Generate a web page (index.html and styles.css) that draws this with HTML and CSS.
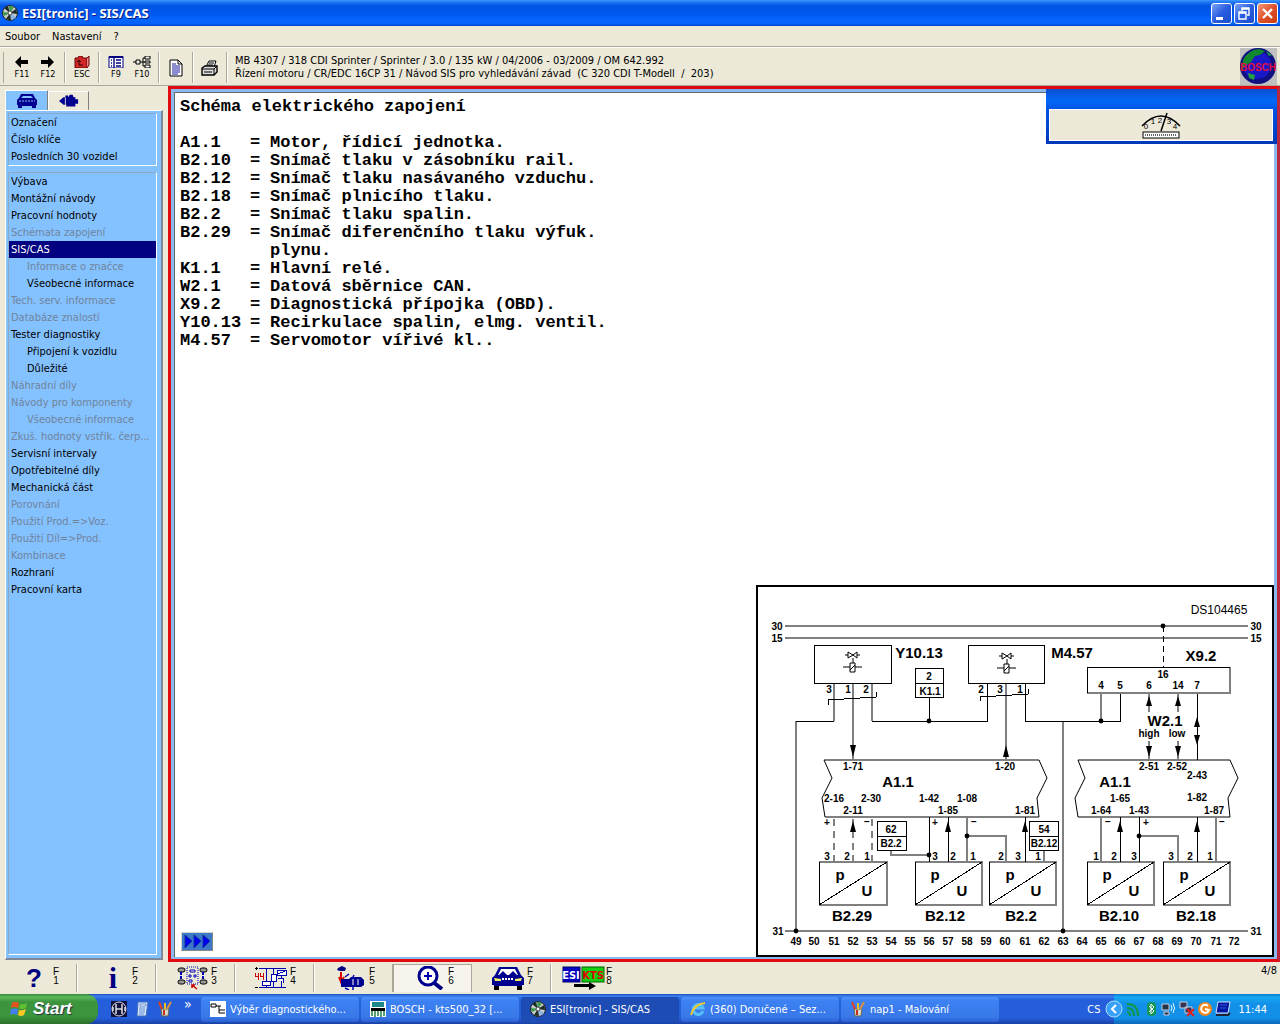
FILE: index.html
```html
<!DOCTYPE html>
<html lang="cs">
<head>
<meta charset="utf-8">
<title>ESI[tronic] - SIS/CAS</title>
<link rel="stylesheet" href="styles.css">
</head>
<body>
<svg class="defs" aria-hidden="true">
  <symbol id="disc" viewBox="0 0 16 16">
    <circle cx="8" cy="8" r="7.5" fill="#c8ccc8" stroke="#222"/>
    <path d="M8 8L2 3A8 8 0 0 1 6 1ZM8 8L14 4A8 8 0 0 1 15 9ZM8 8L9 15A8 8 0 0 1 4 14Z" fill="#1c2c28"/>
    <path d="M8 8L7 1A8 8 0 0 1 12 2ZM8 8L1 7A8 8 0 0 0 2 11Z" fill="#3c9a4c"/>
    <path d="M8 8L14 12A8 8 0 0 1 10 15Z" fill="#88b4e8"/>
    <circle cx="8" cy="8" r="2" fill="#fff" stroke="#444"/>
  </symbol>
  <symbol id="car" viewBox="0 0 34 24">
    <path d="M8 1H26L30 9L33 12V19H31V23H26V20H8V23H3V19H1V12L4 9Z" fill="#000090"/>
    <path d="M10 3H24L27 9H7Z" fill="#fff"/>
    <path d="M8 9L12 5L16 9ZM18 9L22 5L26 9Z" fill="#000090"/>
    <path d="M3 12L10 13V15L4 15ZM31 12L24 13V15L30 15Z" fill="#f4f060"/>
    <path d="M11 13H23" stroke="#fff" stroke-width="2" stroke-dasharray="2 1"/>
    <path d="M3 20H8V24H3ZM26 20H31V24H26Z" fill="#000"/>
  </symbol>
  <symbol id="bluecar" viewBox="0 0 22 14">
    <path d="M5 0H17L19 4L21 6V11H20V14H16V12H6V14H2V11H1V6L3 4Z" fill="#000090"/>
    <path d="M7 2H15L17 4H5Z" fill="#84c1ff"/>
    <path d="M3 7H19" stroke="#84c1ff" stroke-dasharray="2 1"/>
  </symbol>
  <symbol id="paint" viewBox="0 0 16 16">
    <path d="M4 8H12L11 15H5Z" fill="#d8d8c8" stroke="#665"/>
    <path d="M5 8L2 1" stroke="#e04020" stroke-width="2"/>
    <path d="M8 8V2" stroke="#f0c020" stroke-width="2"/>
    <path d="M10 8L14 1" stroke="#d89040" stroke-width="2"/>
    <path d="M7 9V14" stroke="#c03020" stroke-width="2"/>
  </symbol>
</svg>

<header class="titlebar">
  <svg class="i16"><use href="#disc"/></svg>
  <h1>ESI[tronic] - SIS/CAS</h1>
  <div class="winbtns">
    <button aria-label="Minimalizovat"><svg viewBox="0 0 19 19"><path d="M4 13H11V16H4Z" fill="#fff"/></svg></button>
    <button aria-label="Obnovit"><svg viewBox="0 0 19 19"><path d="M7 7V4H14V11H12M7 5H14M4 8H11V15H4ZM4 9H11" fill="none" stroke="#fff" stroke-width="1.4"/></svg></button>
    <button class="close" aria-label="Zavřít"><svg viewBox="0 0 19 19"><path d="M5 5L14 14M14 5L5 14" stroke="#fff" stroke-width="2.3"/></svg></button>
  </div>
</header>

<nav class="menubar">
  <button>Soubor</button><button>Nastavení</button><button>?</button>
</nav>

<div class="toolbar">
  <div class="tgroup first">
    <button><svg viewBox="0 0 18 12"><path d="M2 6L8 0V4H15V8H8V12Z"/></svg>F11</button>
    <button><svg viewBox="0 0 18 12"><path d="M15 6L9 0V4H2V8H9V12Z"/></svg>F12</button>
  </div>
  <div class="tgroup"><button><svg viewBox="0 0 18 12"><path d="M2 2H5L6 0H9L10 2H14V12H2Z" fill="#d02828" stroke="#600"/><path d="M14 2L16 0V9L14 12" fill="#e88" stroke="#600"/><path d="M6 9V4M4 6L6 4L8 6M6 9H10" fill="none" stroke="#300"/></svg>ESC</button></div>
  <div class="tgroup">
    <button><svg viewBox="0 0 18 12"><rect x="2" y="1" width="14" height="11" fill="#fff" stroke="#000080"/><path d="M2 1H16" stroke="#000080" stroke-width="2"/><path d="M7 2V12M4 4H5M4 7H5M4 10H5M9 4H14M9 7H14M9 10H14" stroke="#000080" stroke-width="1.4"/></svg>F9</button>
    <button><svg viewBox="0 0 18 12"><path d="M0 6H10M10 2V10M10 2H12M10 6H12M10 10H12" stroke="#000"/><path d="M3 4H7V8H3ZM12 0H17V3H12ZM12 5H17V7H12ZM12 9H17V12H12Z" fill="#eee" stroke="#000"/></svg>F10</button>
  </div>
  <div class="tgroup"><button aria-label="Dokument"><svg class="tall" viewBox="0 0 18 18"><path d="M3 1H11L15 5V17H3Z" fill="#fff" stroke="#000"/><path d="M11 1V5H15" fill="none" stroke="#000"/><path d="M5 5H9M5 7H13M5 9H13M5 11H13M5 13H13M5 15H11" stroke="#1818a0"/></svg></button></div>
  <div class="tgroup"><button aria-label="Tisk"><svg class="tall" viewBox="0 0 18 18"><path d="M5 8L8 2H15L13 8Z" fill="#fff" stroke="#000"/><path d="M8 4H13M7 6H12" stroke="#000"/><path d="M1 9L4 7H16V13L13 16H1Z" fill="#ddd" stroke="#000" stroke-width="1.4"/><path d="M1 10H13V16M13 10L16 7M3 13H11" fill="none" stroke="#000"/></svg></button></div>
  <p class="vehicle">MB 4307 / 318 CDI Sprinter / Sprinter / 3.0 / 135 kW / 04/2006 - 03/2009 / OM 642.992<br>Řízení motoru / CR/EDC 16CP 31 / Návod SIS pro vyhledávání závad&nbsp; (C 320 CDI T-Modell&nbsp; /&nbsp; 203)</p>
  <svg class="globe" viewBox="0 0 37 37"><rect width="37" height="37" fill="#c0c0c0"/><circle cx="18" cy="18" r="18" fill="#101080"/><circle cx="17" cy="17" r="14" fill="#1818c8"/><path d="M3 12Q8 2 19 1L25 3L20 7L15 8L11 14L6 17L2 22Z" fill="#108830"/><path d="M26 3L32 7L29 8ZM8 25L15 27L14 32L9 30Z" fill="#20a040"/><text x="18" y="23" text-anchor="middle">BOSCH</text></svg>
</div>

<main>
  <aside>
    <div class="tabs">
      <button class="on" aria-label="Vozidlo"><svg class="tabcar"><use href="#bluecar"/></svg></button>
      <button aria-label="Komponenty"><svg class="tabpump" viewBox="0 0 22 14"><path d="M0 7L5 3H7V1H10V3L12 0H15L16 3H18V5H21V10H18V13H8V11H5Z" fill="#000090"/><path d="M7 3V12" stroke="#ddd"/></svg></button>
    </div>
    <nav class="panel">
      <div class="group">
        <button>Označení</button><button>Číslo klíče</button><button>Posledních 30 vozidel</button>
      </div>
      <div class="group grow">
        <button>Výbava</button><button>Montážní návody</button><button>Pracovní hodnoty</button>
        <button disabled>Schémata zapojení</button><button class="sel">SIS/CAS</button>
        <button class="sub" disabled>Informace o značce</button><button class="sub">Všeobecné informace</button>
        <button disabled>Tech. serv. informace</button><button disabled>Databáze znalostí</button>
        <button>Tester diagnostiky</button><button class="sub">Připojení k vozidlu</button><button class="sub">Důležité</button>
        <button disabled>Náhradní díly</button><button disabled>Návody pro komponenty</button><button class="sub" disabled>Všeobecné informace</button>
        <button disabled>Zkuš. hodnoty vstřik. čerp...</button><button>Servisní intervaly</button><button>Opotřebitelné díly</button>
        <button>Mechanická část</button><button disabled>Porovnání</button><button disabled>Použití Prod.=&gt;Voz.</button>
        <button disabled>Použití Díl=&gt;Prod.</button><button disabled>Kombinace</button><button>Rozhraní</button><button>Pracovní karta</button>
      </div>
    </nav>
  </aside>

  <section class="frame">
    <div class="sheet">
      <div class="doc">
        <h2>Schéma elektrického zapojení</h2>
        <table>
          <tr><th>A1.1</th><td>=</td><td>Motor, řídicí jednotka.</td></tr>
          <tr><th>B2.10</th><td>=</td><td>Snímač tlaku v zásobníku rail.</td></tr>
          <tr><th>B2.12</th><td>=</td><td>Snímač tlaku nasávaného vzduchu.</td></tr>
          <tr><th>B2.18</th><td>=</td><td>Snímač plnicího tlaku.</td></tr>
          <tr><th>B2.2</th><td>=</td><td>Snímač tlaku spalin.</td></tr>
          <tr><th>B2.29</th><td>=</td><td>Snímač diferenčního tlaku výfuk.<br>plynu.</td></tr>
          <tr><th>K1.1</th><td>=</td><td>Hlavní relé.</td></tr>
          <tr><th>W2.1</th><td>=</td><td>Datová sběrnice CAN.</td></tr>
          <tr><th>X9.2</th><td>=</td><td>Diagnostická přípojka (OBD).</td></tr>
          <tr><th>Y10.13</th><td>=</td><td>Recirkulace spalin, elmg. ventil.</td></tr>
          <tr><th>M4.57</th><td>=</td><td>Servomotor vířivé kl..</td></tr>
        </table>
      </div>
      <div class="lower">
        <button class="next" aria-label="Další"><svg viewBox="0 0 28 15"><path d="M2 1L9 7L2 14ZM11 1L18 7L11 14ZM20 1L27 7L20 14Z" fill="#0000f0" stroke="#1030a0"/></svg></button>
        <svg class="scheme" viewBox="758 587 514 368" role="img" aria-label="Schéma DS104465">
          <g class="gray">
            <path d="M785 626H1248M785 638H1248M785 931H1248"/>
            <path d="M834 684V721M853 684V760M872 684V721M796 721V931M1006 684V760M1101 694V721M1063 721V931"/>
            <path d="M1149 694V712M1149 741V760M1178 694V712M1178 741V760M824 760H1039M825 817H1039M1078 760H1230M1078 817H1230"/>
            <path d="M891 850V855H929M967 817V862M967 836H1006V862M1044 850V862M1101 817V862M1139 836H1178V862M1216 817V862"/>
            <path stroke-dasharray="7 5" d="M834 819V862M853 819V862M872 819V862"/>
            <path d="M819 862H887V905H819M915 862H982V905H915M989 862H1056V905H989M1087 862H1154V905H1087M1163 862H1230V905H1163M1230 667V693H1087"/>
          </g>
          <g class="black">
            <rect x="814" y="645" width="77" height="38"/><rect x="968" y="645" width="76" height="38"/>
            <path d="M834 721H796M872 721H987V684M828 705V700L876 697V692M980 701V697L1028 694V689M1025 684V721H1120V694M1087 693V667H1230M929 697V721"/>
            <path d="M915 668H943V697H915ZM915 683H943M877 821H906V850H877ZM877 836H906M1029 821H1058V850H1029ZM1029 836H1058"/>
            <path d="M1163 626V667" stroke-dasharray="6 4"/>
            <path d="M1197 694V760M929 817V862M948 817V862M1025 817V862M1120 817V862M1139 817V862M1197 817V862"/>
            <path d="M819 862V905L887 862M915 862V905L982 862M989 862V905L1056 862M1087 862V905L1154 862M1163 862V905L1230 862"/>
          </g>
          <g class="thin">
            <path d="M824 760L832 778L822 798L825 817M1039 760L1047 778L1037 798L1039 817M1078 760L1085 778L1075 798L1078 817M1230 760L1238 778L1228 798L1230 817"/>
            <path id="valve" d="M845 655H848M857 655H860M848 652L853 655L848 658ZM857 652L853 655L857 658ZM853 658V663M843 667H850M855 667H862M850 663H855V672H850ZM850 670L855 665"/>
            <use href="#valve" x="154" y="1"/>
          </g>
          <g class="solid">
            <path d="M850 745H856L853 757ZM1003 757H1009L1006 745ZM1146 706H1152L1149 696ZM1175 706H1181L1178 696ZM1146 746H1152L1149 757ZM1175 746H1181L1178 757ZM1194 727H1200L1197 717ZM1194 735H1200L1197 745Z"/>
            <path d="M850 832H856L853 821ZM945 832H951L948 821ZM1022 832H1028L1025 821ZM1117 832H1123L1120 821ZM1194 832H1200L1197 821Z"/>
            <circle cx="929" cy="721" r="2.4"/><circle cx="1101" cy="721" r="2.4"/><circle cx="1163" cy="626" r="2.4"/><circle cx="929" cy="855" r="2.4"/><circle cx="967" cy="836" r="2.4"/><circle cx="1139" cy="836" r="2.4"/><circle cx="796" cy="931" r="2.4"/><circle cx="1063" cy="931" r="2.4"/>
          </g>
          <text class="ds" x="1219" y="614">DS104465</text>
          <g class="pin">
            <text x="777" y="630">30</text><text x="777" y="642">15</text><text x="1256" y="630">30</text><text x="1256" y="642">15</text><text x="778" y="935">31</text><text x="1256" y="935">31</text>
            <text x="829" y="693">3</text><text x="848" y="693">1</text><text x="866" y="693">2</text><text x="981" y="693">2</text><text x="1000" y="693">3</text><text x="1020" y="693">1</text>
            <text x="929" y="680">2</text><text x="930" y="695">K1.1</text><text x="891" y="833">62</text><text x="891" y="847">B2.2</text><text x="1044" y="833">54</text><text x="1044" y="847">B2.12</text>
            <text x="1163" y="678">16</text><text x="1101" y="689">4</text><text x="1120" y="689">5</text><text x="1149" y="689">6</text><text x="1178" y="689">14</text><text x="1197" y="689">7</text>
            <text x="1149" y="737">high</text><text x="1177" y="737">low</text>
            <text x="853" y="770">1-71</text><text x="1005" y="770">1-20</text><text x="834" y="802">2-16</text><text x="871" y="802">2-30</text><text x="929" y="802">1-42</text><text x="967" y="802">1-08</text><text x="853" y="814">2-11</text><text x="948" y="814">1-85</text><text x="1025" y="814">1-81</text>
            <text x="1149" y="770">2-51</text><text x="1177" y="770">2-52</text><text x="1197" y="779">2-43</text><text x="1120" y="802">1-65</text><text x="1197" y="801">1-82</text><text x="1101" y="814">1-64</text><text x="1139" y="814">1-43</text><text x="1214" y="814">1-87</text>
            <text x="827" y="826">+</text><text x="867" y="825">−</text><text x="935" y="826">+</text><text x="974" y="825">−</text><text x="1108" y="825">−</text><text x="1146" y="826">+</text><text x="1222" y="825">−</text>
            <text x="827" y="860">3</text><text x="847" y="860">2</text><text x="867" y="860">1</text><text x="935" y="860">3</text><text x="953" y="860">2</text><text x="973" y="860">1</text><text x="1001" y="860">2</text><text x="1018" y="860">3</text><text x="1038" y="860">1</text>
            <text x="1096" y="860">1</text><text x="1114" y="860">2</text><text x="1134" y="860">3</text><text x="1171" y="860">3</text><text x="1190" y="860">2</text><text x="1210" y="860">1</text>
            <text x="796" y="945">49</text><text x="814" y="945">50</text><text x="834" y="945">51</text><text x="853" y="945">52</text><text x="872" y="945">53</text><text x="891" y="945">54</text><text x="910" y="945">55</text><text x="929" y="945">56</text><text x="948" y="945">57</text><text x="967" y="945">58</text><text x="986" y="945">59</text><text x="1005" y="945">60</text>
            <text x="1025" y="945">61</text><text x="1044" y="945">62</text><text x="1063" y="945">63</text><text x="1082" y="945">64</text><text x="1101" y="945">65</text><text x="1120" y="945">66</text><text x="1139" y="945">67</text><text x="1158" y="945">68</text><text x="1177" y="945">69</text><text x="1196" y="945">70</text><text x="1216" y="945">71</text><text x="1234" y="945">72</text>
          </g>
          <g class="part">
            <text x="919" y="658">Y10.13</text><text x="1072" y="658">M4.57</text><text x="1201" y="661">X9.2</text><text x="1165" y="726">W2.1</text><text x="898" y="787">A1.1</text><text x="1115" y="787">A1.1</text>
            <text x="852" y="921">B2.29</text><text x="945" y="921">B2.12</text><text x="1021" y="921">B2.2</text><text x="1119" y="921">B2.10</text><text x="1196" y="921">B2.18</text>
            <text x="840" y="880">p</text><text x="867" y="896">U</text><text x="935" y="880">p</text><text x="962" y="896">U</text><text x="1010" y="880">p</text><text x="1036" y="896">U</text><text x="1107" y="880">p</text><text x="1134" y="896">U</text><text x="1184" y="880">p</text><text x="1210" y="896">U</text>
          </g>
        </svg>
      </div>
    </div>
    <div class="float">
      <button aria-label="Měřidlo"><svg viewBox="0 0 40 27"><path d="M1 14Q20 -6 39 14" fill="none" stroke="#000" stroke-width="1.5"/><path d="M20 19L26 1" stroke="#000" stroke-width="1.5"/><rect x="2" y="20" width="36" height="6" fill="#fff" stroke="#000"/><path d="M4 23H36" stroke="#666" stroke-width="2" stroke-dasharray="1 1"/><text x="5" y="17">0</text><text x="12" y="12">1</text><text x="19" y="11">2</text><text x="28" y="12">3</text><text x="34" y="17">4</text></svg></button>
    </div>
  </section>
</main>

<div class="fbar">
  <button><span class="ic glyph">?</span><span class="fk">F<br>1</span></button>
  <button><span class="ic glyph serif">i</span><span class="fk">F<br>2</span></button>
  <button><svg class="ic" viewBox="0 0 34 24"><g fill="#999" stroke="#000"><rect x="3" y="2" width="7" height="4" rx="2"/><rect x="3" y="14" width="7" height="4" rx="2"/><rect x="25" y="2" width="7" height="4" rx="2"/><rect x="25" y="14" width="7" height="4" rx="2"/></g><path d="M6 6V14M28 6V14" stroke="#0000b0" stroke-width="2" stroke-dasharray="3 1"/><path d="M12 1H23V18H12Z" fill="none" stroke="#0000b0" stroke-dasharray="1 1"/><path d="M15 4H20V6H15ZM14 9H16V11H14ZM19 9H21V11H19ZM14 14H17V16H14Z" fill="#fff" stroke="#0000b0"/><path d="M17 19L22 23M17 22V19H20" fill="none" stroke="#d00000" stroke-width="1.5"/></svg><span class="fk">F<br>3</span></button>
  <button><svg class="ic crisp" viewBox="0 0 34 24"><path d="M5 2H32M5 21H32M12 2V21M19 2V9M19 15V21M27 8V21" stroke="#0000b0"/><path d="M8 15H16V19H8ZM17 8H22V15H17ZM23 4H32V9H23ZM24 12H29V17" fill="#fff" stroke="#0000b0"/><path d="M24 8L31 5" stroke="#0000b0"/><path d="M1 7V10H4V14M4 7V10M6 7V10H9V14M9 7V10" fill="none" stroke="#d00000"/><path d="M2 1V4M1 2H4M1 21H4" stroke="#000"/></svg><span class="fk">F<br>4</span></button>
  <button><svg class="ic" viewBox="0 0 34 24"><path d="M5 2L9 0L13 2L12 5H7L4 4Z" fill="#000080"/><path d="M8 6V14M6 11L8 16L11 11" fill="none" stroke="#d00" stroke-width="2"/><path d="M8 13H16L18 11H28L31 14V19L28 21H8Z" fill="#000090"/><path d="M20 13V19M25 13V19" stroke="#fff"/><path d="M12 11L16 8M12 22L16 24M21 9L19 13M20 24V20" stroke="#0000b0" stroke-width="1.5"/></svg><span class="fk">F<br>5</span></button>
  <button class="pressed"><svg class="ic" viewBox="0 0 34 24"><path d="M21 16L30 23" stroke="#000080" stroke-width="4"/><circle cx="16" cy="10" r="9" fill="#fff" stroke="#000090" stroke-width="3"/><path d="M12 10H20M16 6V14" stroke="#0000b0" stroke-width="2"/></svg><span class="fk">F<br>6</span></button>
  <button><svg class="ic"><use href="#car"/></svg><span class="fk">F<br>7</span></button>
  <button><svg class="ic wide" viewBox="0 0 44 24"><rect x="1" y="1" width="17" height="15" fill="#0000c0" stroke="#000060"/><rect x="20" y="1" width="22" height="15" fill="#10d010" stroke="#006000"/><text x="9" y="13" fill="#fff" text-anchor="middle">ESI</text><text x="31" y="13" fill="#e00000" text-anchor="middle">KTS</text><path d="M12 18H27V16L34 20L27 24V21H12Z"/></svg><span class="fk">F<br>8</span></button>
  <span class="page">4/8</span>
</div>

<footer class="taskbar">
  <button class="start"><svg viewBox="0 0 18 18"><path d="M2 3Q5 1 9 3L8 8Q4 6 1 8Z" fill="#e85020"/><path d="M10 4Q14 5 17 3L16 8Q12 10 9 8Z" fill="#60c030"/><path d="M1 9Q4 8 8 9L7 15Q3 13 0 15Z" fill="#4080f0"/><path d="M9 10Q12 11 16 9L14 15Q11 17 8 15Z" fill="#f8c820"/></svg>Start</button>
  <div class="quick">
    <svg class="i16"><rect width="16" height="16" fill="#101040"/><circle cx="8" cy="8" r="7" fill="none" stroke="#ddd"/><path d="M5 3V13M11 3V13M5 8H11M2 6V10M14 6V10" stroke="#ddd" stroke-width="1.5"/></svg>
    <svg class="i16"><path d="M4 1H14L12 15H3Z" fill="#d0e4ff" stroke="#4870b8"/><path d="M6 3H12V5H6ZM5 7H11M5 9H11M5 11H11M5 13H10" fill="#fff" stroke="#6890d0"/></svg>
    <svg class="i16"><use href="#paint"/></svg>
    <span>»</span>
  </div>
  <div class="tasks">
    <button><svg class="i16"><rect width="16" height="16" fill="#fff"/><path d="M1 3H6V6H1ZM6 5H9V12H15M9 9H15M9 5H11" fill="none" stroke="#000"/></svg>Výběr diagnostického...</button>
    <button><svg class="i16"><rect width="16" height="16" fill="#fff"/><path d="M2 1H14V6H2Z" fill="#208888"/><path d="M1 7H15V10H1Z"/><path d="M2 10V15M5 10V16M8 10V15M11 10V16M14 10V15" stroke="#208040" stroke-width="1.5"/></svg>BOSCH - kts500_32 [...</button>
    <button class="active"><svg class="i16"><use href="#disc"/></svg>ESI[tronic] - SIS/CAS</button>
    <button><svg class="i16"><path d="M13 10A5 5 0 1 1 13 7H4" fill="none" stroke="#58c0f8" stroke-width="3"/><path d="M1 14Q4 3 15 2" fill="none" stroke="#f0c830" stroke-width="2"/></svg>(360) Doručené – Sez...</button>
    <button><svg class="i16"><use href="#paint"/></svg>nap1 - Malování</button>
  </div>
  <span class="lang">CS</span>
  <div class="tray">
    <button class="chev" aria-label="Skryté ikony"><svg viewBox="0 0 18 18"><circle cx="9" cy="9" r="8" fill="#38a0f8" stroke="#a8dcff"/><path d="M11 5L7 9L11 13" fill="none" stroke="#fff" stroke-width="2"/></svg></button>
    <svg class="i16"><path d="M2 3Q13 3 13 15M2 7Q9 7 9 15M2 11Q5 11 5 15" fill="none" stroke="#109840" stroke-width="2"/></svg>
    <svg class="i16"><rect x="4" y="1" width="9" height="14" rx="4" fill="#109858"/><path d="M6 5L11 10L8 13V3L11 6L6 11" fill="none" stroke="#fff"/></svg>
    <svg class="i16"><path d="M1 3H8V9H1ZM3 11H8V14H3Z" fill="#234" stroke="#ccd"/><path d="M10 4Q12 7 10 10M12 2Q15 7 12 12" fill="none" stroke="#dff"/></svg>
    <svg class="i16"><path d="M1 1H8V7H1ZM6 6H13V12H6Z" fill="#335" stroke="#ccd"/><path d="M8 8L15 15M15 8L8 15" stroke="#e02020" stroke-width="2"/></svg>
    <svg class="i16"><circle cx="8" cy="8" r="7" fill="#f08820"/><path d="M11 5A4 4 0 1 0 12 9L8 8" fill="none" stroke="#fff" stroke-width="2"/></svg>
    <svg class="i16"><path d="M3 1H15L13 12H1Z" fill="#0018a0" stroke="#d8e0ff"/><path d="M1 14H13L15 12" fill="none" stroke="#223" stroke-width="2"/><path d="M5 4H12M5 7H11" stroke="#3858e0"/></svg>
    <time>11:44</time>
  </div>
</footer>
</body>
</html>
```
FILE: styles.css
```css
* { box-sizing: border-box; }
body {
  margin: 0;
  min-height: 100vh;
  display: flex;
  flex-direction: column;
  background: #ece9d8;
  color: #000;
  font: 11px/13px "DejaVu Sans Condensed", "Liberation Sans", sans-serif;
}
button {
  font: inherit;
  color: inherit;
  background: none;
  border: 0;
  padding: 0;
  margin: 0;
  text-align: left;
  white-space: nowrap;
}
svg { flex: none; display: block; }
.defs { position: absolute; width: 0; height: 0; }
.i16 { width: 16px; height: 16px; }

.titlebar {
  height: 26px;
  display: flex;
  align-items: center;
  gap: 4px;
  padding: 0 2px;
  background: linear-gradient(#3b96ff 0, #1a6cf0 3px, #0054e3 6px, #0058ee 14px, #0566ff 20px, #0461f8 24px, #0040c0);
}
.titlebar h1 {
  flex: 1;
  margin: 0;
  color: #fff;
  font: bold 13px/16px "Noto Sans", "Open Sans", sans-serif;
  text-shadow: 1px 1px #0a1883;
}
.winbtns { display: flex; gap: 2px; }
.winbtns button {
  width: 21px;
  height: 21px;
  border: 1px solid #fff;
  border-radius: 3px;
  background: linear-gradient(135deg, #7aa2f4, #2a5ce0 50%, #1c4ccc);
}
.winbtns .close { background: linear-gradient(135deg, #f09878, #e0502c 50%, #c83c10); }

.menubar { display: flex; gap: 12px; height: 20px; padding: 0 5px; align-items: center; }

.toolbar {
  display: flex;
  height: 40px;
  padding: 1px 3px;
  border-top: 1px solid #aca899;
  box-shadow: inset 0 1px #fff, inset 0 -1px #aca899;
}
.tgroup {
  display: flex;
  padding: 0 3px 0 4px;
  margin: 4px 0 2px;
  border-right: 1px solid #aca899;
  box-shadow: 1px 0 #fff;
}
.tgroup.first { border-left: 1px solid #aca899; padding-left: 5px; }
.tgroup button { width: 26px; display: flex; flex-direction: column; align-items: center; justify-content: center; font-size: 9px; line-height: 9px; gap: 2px; }
.tgroup svg { width: 18px; height: 12px; }
.tgroup .tall { width: 18px; height: 18px; }
.vehicle { flex: 1; margin: 0 0 0 2px; padding: 6px 0 0 6px; white-space: nowrap; }
.globe { width: 37px; height: 37px; }
.globe text { font: bold 10px "Liberation Sans", sans-serif; fill: #e01040; }

main { flex: 1; display: flex; padding-left: 5px; }
aside { width: 158px; margin-right: 5px; display: flex; flex-direction: column; padding: 4px 0 2px; }
.tabs { display: flex; height: 20px; align-items: flex-end; }
.tabs button {
  width: 41px;
  height: 19px;
  display: flex;
  align-items: center;
  justify-content: center;
  border: 1px solid #fff;
  border-right: 1px solid #808080;
  border-bottom: 0;
}
.tabs .on { width: 43px; height: 20px; background: #84c1ff; }
.tabcar { width: 22px; height: 14px; }
.tabpump { width: 20px; height: 14px; }
.panel {
  flex: 1;
  display: flex;
  flex-direction: column;
  gap: 6px;
  padding: 2px 4px 3px 2px;
  background: #84c1ff;
  border: 1px solid #fff;
  border-right: 2px solid #808898;
  border-bottom: 2px solid #808898;
}
.group {
  display: flex;
  flex-direction: column;
  border: 1px solid #8fa8c4;
  border-right-color: #fff;
  border-bottom-color: #fff;
}
.grow { flex: 1; }
.group button { height: 17px; padding-left: 2px; }
.group .sub { padding-left: 18px; }
.group button:disabled { color: #70849c; }
.group .sel { background: #000080; color: #fff; }

.frame {
  flex: 1;
  position: relative;
  display: flex;
  border: 3px solid #e00a10;
  border-right-color: #b82840;
  background: #8cb8f0;
  padding: 3px 3px 2px;
}
.sheet {
  flex: 1;
  display: flex;
  flex-direction: column;
  justify-content: space-between;
  background: #fff;
  border-top: 1px solid #606870;
  border-left: 1px solid #606870;
}
.doc { padding: 5px; font: bold 17px/18px "Liberation Mono", monospace; }
.doc h2 { margin: 0 0 18px; font: inherit; }
.doc table { border-collapse: collapse; }
.doc th, .doc td { padding: 0; font: inherit; text-align: left; vertical-align: top; }
.doc th { width: 70px; }
.doc td:nth-child(2) { width: 20px; }
.lower { display: flex; justify-content: space-between; align-items: flex-end; }
.next { margin: 0 0 6px 6px; padding: 1px; background: #3c78c8; border: 1px solid #d8d4c8; border-right-color: #888; border-bottom-color: #888; }
.next svg { width: 28px; height: 15px; }
.scheme { width: 518px; height: 372px; border: 2px solid #000; }
.scheme text { font: bold 10px "Liberation Sans", Arial, sans-serif; text-anchor: middle; }
.scheme .part text { font-size: 15px; }
.scheme text.ds { font-weight: normal; font-size: 12px; }
.gray path { fill: none; stroke: #808080; stroke-width: 2; }
.black path, .black rect { fill: none; stroke: #000; shape-rendering: crispEdges; }
.thin path, .thin use { fill: none; stroke: #000; }
.crisp { shape-rendering: crispEdges; }

.float {
  position: absolute;
  top: 0;
  right: 0;
  width: 231px;
  height: 55px;
  display: flex;
  padding: 20px 4px 3px 3px;
  background: linear-gradient(#0a50d0, #0468f8 12px, #0054e3 20px, #0038b8);
}
.float button { flex: 1; display: flex; justify-content: center; align-items: center; background: #ece9d8; border: 1px solid #fff; }
.float svg { width: 40px; height: 27px; }
.float text { font: 8px "Liberation Sans", sans-serif; text-anchor: middle; }

.fbar { display: flex; height: 32px; padding-top: 2px; }
.fbar button {
  width: 79px;
  height: 28px;
  padding-left: 19px;
  display: flex;
  align-items: center;
  gap: 2px;
  border-right: 1px solid #aca899;
  box-shadow: 1px 0 #fff;
}
.fbar button:first-child { width: 77px; padding-left: 17px; }
.fbar button:nth-of-type(8) { border: 0; box-shadow: none; padding-left: 11px; gap: 0; }
.fbar .pressed { background: #f6f4ec; box-shadow: inset 1px 1px #aca899; }
.ic { width: 34px; height: 24px; }
.ic.wide { width: 44px; }
.wide text { font: bold 11px "DejaVu Sans Condensed", sans-serif; }
.glyph { text-align: center; font: bold 26px/24px "Liberation Sans", sans-serif; color: #000080; }
.glyph.serif { font-family: "Liberation Serif", serif; font-size: 30px; }
.fk { font: 10px/9px "Liberation Sans", sans-serif; text-align: center; align-self: flex-start; padding-top: 3px; }
.page { margin-left: auto; padding-right: 3px; }

.taskbar {
  height: 30px;
  display: flex;
  align-items: center;
  color: #fff;
  background: linear-gradient(#1f48b8 0, #3a80f0 2px, #245edb 6px, #245edb 24px, #1941a5);
}
.start {
  width: 98px;
  height: 30px;
  display: flex;
  align-items: center;
  gap: 5px;
  padding-left: 10px;
  border-radius: 0 12px 12px 0;
  background: linear-gradient(#388838 0, #5cb85c 3px, #3c943c 8px, #3c963c 22px, #2a702a);
  font: italic bold 17px/20px "Liberation Sans", sans-serif;
  text-shadow: 1px 1px 1px #234;
}
.start svg { width: 18px; height: 18px; }
.quick { width: 103px; display: flex; align-items: center; gap: 7px; padding-left: 13px; }
.quick span { margin: -10px 0 0 4px; font-size: 14px; }
.tasks { flex: 1; display: flex; gap: 2px; }
.tasks button {
  width: 158px;
  height: 25px;
  display: flex;
  align-items: center;
  gap: 4px;
  padding-left: 9px;
  border-radius: 3px;
  background: linear-gradient(#5090f8, #3c81f3 4px, #3878e8 20px, #2c60d0);
}
.tasks .active { background: #1c4cb4; }
.lang { padding-right: 14px; }
.tray {
  height: 30px;
  display: flex;
  align-items: center;
  gap: 2px;
  padding-right: 13px;
  background: linear-gradient(#0c78d0, #18a8f0 3px, #1290e8 10px, #1290e8 24px, #0c68b8);
}
.chev { margin-left: -9px; }
.chev svg { width: 18px; height: 18px; }
.tray time { margin-left: 5px; }
```
